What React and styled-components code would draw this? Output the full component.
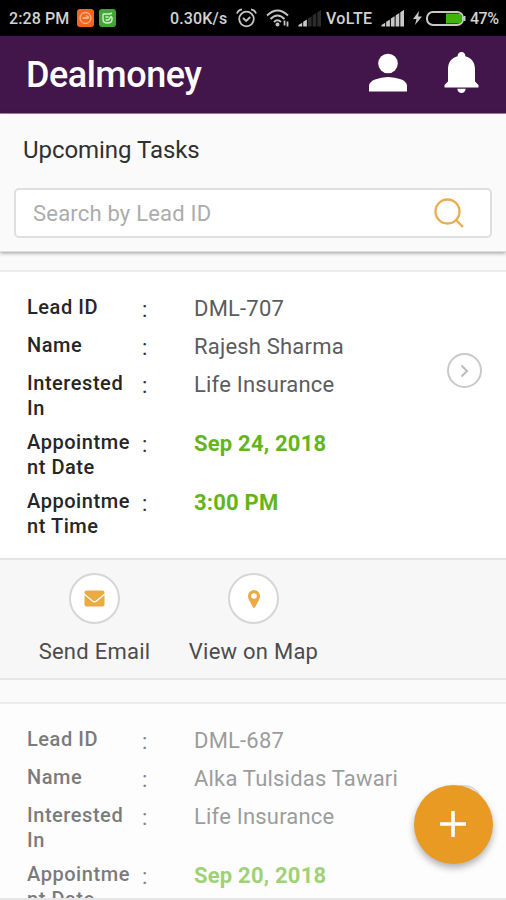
import styled, { createGlobalStyle } from "styled-components";

const GlobalStyle = createGlobalStyle`
  * {
    box-sizing: border-box;
  }

  body {
    margin: 0;
    overflow: hidden;
    background: #fafafa;
    font-family: Roboto, "Liberation Sans", sans-serif;
  }
`;

const Screen = styled.div`
  width: 506px;
  height: 900px;
  display: flex;
  flex-direction: column;
  overflow: hidden;
  position: relative;
  border-bottom: 2px solid #e6e6e6;
`;

const StatusBar = styled.div`
  flex: none;
  height: 36px;
  padding: 0 8px 0 9px;
  display: flex;
  justify-content: space-between;
  align-items: center;
  background: #000;
  color: #d2d2d2;
`;

const StatusGroup = styled.div`
  display: flex;
  align-items: center;

  svg {
    flex: none;
    display: block;
  }
`;

const StatusText = styled.span`
  width: ${({ $width }) => $width}px;
  margin-right: ${({ $gap }) => $gap || 0}px;
  font-size: 16px;
  font-weight: 500;
  line-height: 20px;
  padding-top: 1px;
  letter-spacing: ${({ $spacing }) => $spacing || 0}px;
  white-space: nowrap;
`;

const StatusIcon = styled.svg`
  margin-right: ${({ $gap }) => $gap || 0}px;
`;

const Header = styled.header`
  flex: none;
  height: 78px;
  padding: 0 27px 0 26px;
  display: flex;
  align-items: center;
  justify-content: space-between;
  background: #43164b;
  border-bottom: 1px solid #a08ba4;
  color: #fff;
`;

const Title = styled.h1`
  margin: 0;
  font-size: 36px;
  font-weight: 500;
  line-height: 42px;
  letter-spacing: -0.5px;
`;

const HeaderIcons = styled.div`
  display: flex;
  align-items: center;
  gap: 36px;
  margin-bottom: 5px;
`;

const SearchPanel = styled.section`
  flex: none;
  height: 138px;
  padding: 0 14px;
  background: #fafafa;
  border-bottom: 1px solid #dedede;
  box-shadow: 0 1px 4px rgba(0, 0, 0, 0.4);
`;

const SectionTitle = styled.h2`
  margin: 0;
  padding: 22px 0 0 9px;
  height: 74px;
  font-size: 24px;
  font-weight: 400;
  line-height: 29px;
  letter-spacing: -0.05px;
  color: #303030;
`;

const SearchBox = styled.div`
  height: 50px;
  padding: 0 26px 0 17px;
  display: flex;
  align-items: center;
  justify-content: space-between;
  background: #fff;
  border: 2px solid #dfdfdf;
  border-radius: 5px;
`;

const Placeholder = styled.span`
  padding-top: 1px;
  font-size: 22px;
  letter-spacing: 0.2px;
  color: #acacac;
`;

const TaskList = styled.main`
  flex: none;
  padding-top: 18px;
  display: flex;
  flex-direction: column;
  gap: 22px;
`;

const Card = styled.article`
  border-top: 2px solid #ececec;
  border-bottom: 2px solid #e6e6e6;
  background: ${({ $faded }) => ($faded ? "#fdfdfd" : "#fff")};
`;

const Details = styled.div`
  height: 286px;
  padding: 23px 24px 0 27px;
  display: flex;
  justify-content: space-between;
  opacity: ${({ $faded }) => ($faded ? 0.6 : 1)};
`;

const Rows = styled.div`
  display: flex;
  flex-direction: column;
  gap: 9px;
`;

const Row = styled.div`
  min-height: 29px;
  display: grid;
  grid-template-columns: 105px 62px auto;
  align-items: start;
`;

const Label = styled.div`
  font-size: 20px;
  font-weight: 500;
  line-height: 25px;
  letter-spacing: 0.55px;
  overflow-wrap: anywhere;
  color: #262626;
`;

const Colon = styled.div`
  padding: 1px 0 0 10px;
  font-size: 22px;
  line-height: 27px;
  color: #333;
`;

const Value = styled.div`
  font-size: 22px;
  font-weight: ${({ $highlight }) => ($highlight ? 700 : 400)};
  line-height: 27px;
  letter-spacing: 0.2px;
  white-space: nowrap;
  color: ${({ $highlight }) => ($highlight ? "#62b51c" : "#5c5c5c")};
`;

const OpenButton = styled.div`
  width: 35px;
  height: 35px;
  margin-top: 58px;
  display: flex;
  align-items: center;
  justify-content: center;
  border: 2px solid #c9c9c9;
  border-radius: 50%;
`;

const Actions = styled.div`
  height: 120px;
  padding: 13px 0 0 37px;
  display: flex;
  gap: 37px;
  background: #f7f7f7;
  border-top: 2px solid #e4e4e4;
`;

const Action = styled.div`
  display: flex;
  flex-direction: column;
  align-items: center;
  gap: 14px;
  width: ${({ $width }) => $width}px;
  font-size: 22px;
  line-height: 28px;
  letter-spacing: 0.25px;
  white-space: nowrap;
  color: #4c4c4c;
`;

const ActionIcon = styled.div`
  width: 51px;
  height: 51px;
  display: flex;
  align-items: center;
  justify-content: center;
  background: #fff;
  border: 2px solid #d6d6d6;
  border-radius: 50%;
`;

const AddButton = styled.div`
  position: absolute;
  right: 13px;
  bottom: 34px;
  width: 79px;
  height: 79px;
  padding: 0 1px 1px 0;
  display: flex;
  align-items: center;
  justify-content: center;
  background: #e89a22;
  border-radius: 50%;
  box-shadow: 0 4px 7px rgba(0, 0, 0, 0.3);
`;

const Signal = ({ gap, bars }) => (
  <StatusIcon $gap={gap} width="24" height="17" viewBox="0 0 24 17">
    {[0, 1, 2, 3, 4].map((i) => {
      const x = 0.5 + i * 4.7;
      const top = 15 - i * 3.2;
      return (
        <path
          key={i}
          d={`M${x} 16.5V${top}l3.7-2.3V16.5z`}
          fill={i < bars ? "#c8c8c8" : "#2c2c2c"}
        />
      );
    })}
  </StatusIcon>
);

const Status = () => (
  <StatusBar>
    <StatusGroup>
      <StatusText $width={61} $gap={7} $spacing={0.1}>
        2:28 PM
      </StatusText>
      <StatusIcon $gap={5} width="17" height="18" viewBox="0 0 17 18">
        <rect width="17" height="18" rx="3" fill="#f4661b" />
        <circle cx="8.5" cy="9" r="5.5" fill="none" stroke="#ffb18a" strokeWidth="1.3" />
        <path d="M5.5 9h6M9 6.5l3 2" stroke="#ffc6a8" strokeWidth="1.4" />
      </StatusIcon>
      <StatusIcon width="17" height="18" viewBox="0 0 17 18">
        <rect width="17" height="18" rx="3" fill="#43a536" />
        <path
          d="M4 5h7l2-1M4 5v5.5q0 3.5 4.5 3.5T13 10.500V8M6.500 8h3M6.500 11h3l3-4"
          fill="none"
          stroke="#d3f0cc"
          strokeWidth="1.4"
        />
      </StatusIcon>
    </StatusGroup>
    <StatusGroup>
      <StatusText $width={58} $gap={8} $spacing={0.15}>
        0.30K/s
      </StatusText>
      <StatusIcon
        $gap={9}
        width="21"
        height="20"
        viewBox="0 0 21 20"
        fill="none"
        stroke="#c4c4c4"
        strokeWidth="1.8"
      >
        <circle cx="10.5" cy="11" r="7.3" />
        <path d="M7 10l3.2 3 4-4M1 5.5Q2 2 6 1.3M20 5.5Q19 2 15 1.3" />
      </StatusIcon>
      <StatusIcon
        $gap={8}
        width="24"
        height="18"
        viewBox="0 0 24 18"
        fill="none"
        stroke="#c4c4c4"
        strokeWidth="2"
      >
        <path d="M1 6.5Q11.5-3.5 22 6.5M4.5 10q7-7 14 0M8 13q3.5-3.5 7 0" />
        <circle cx="11.5" cy="15.5" r="1" />
        <path d="M18.5 11.5v5M21.5 12.5v5" strokeWidth="1.8" />
      </StatusIcon>
      <Signal gap={4} bars={2} />
      <StatusText $width={46} $gap={9} $spacing={0.4}>
        VoLTE
      </StatusText>
      <Signal gap={8} bars={5} />
      <StatusIcon $gap={4} width="9" height="14" viewBox="0 0 9 14">
        <path d="M6 0L0 8h3.5L2 14l7-8.5H5.2z" fill="#c8c8c8" />
      </StatusIcon>
      <StatusIcon $gap={4} width="40" height="15" viewBox="0 0 40 15">
        <rect x="1" y="1" width="36" height="13" rx="6" fill="none" stroke="#c8c8c8" strokeWidth="2" />
        <path d="M20 2.5h13q3 0 3 5t-3 5H20z" fill="#3fb50a" />
        <path d="M38.5 5v5" stroke="#c8c8c8" strokeWidth="2" />
      </StatusIcon>
      <StatusText $width={28} $spacing={-0.5}>
        47%
      </StatusText>
    </StatusGroup>
  </StatusBar>
);

const Task = ({ task, faded }) => (
  <Card $faded={faded}>
    <Details $faded={faded}>
      <Rows>
        {task.map(([label, value, highlight]) => (
          <Row key={label}>
            <Label>{label}</Label>
            <Colon>:</Colon>
            <Value $highlight={highlight}>{value}</Value>
          </Row>
        ))}
      </Rows>
      <OpenButton>
        <svg width="9" height="14" viewBox="0 0 9 14" fill="none" stroke="#bcbcbc" strokeWidth="2">
          <path d="M1.5 1.5L7 7l-5.5 5.5" />
        </svg>
      </OpenButton>
    </Details>
    <Actions>
      <Action $width={115}>
        <ActionIcon>
          <svg width="21" height="17" viewBox="0 0 21 17">
            <rect x="0.5" y="0.5" width="20" height="16" rx="2" fill="#ebaa43" />
            <path d="M0 4l8.5 7q2 1.5 4 0L21 4" fill="none" stroke="#fff" strokeWidth="1.3" />
          </svg>
        </ActionIcon>
        Send Email
      </Action>
      <Action $width={129}>
        <ActionIcon>
          <svg width="12" height="18" viewBox="0 0 12 18">
            <path
              d="M6 0a6 6 0 0 0-6 6c0 2 .7 3.2 1.3 4.5L4.8 17q1.2 1.8 2.4 0l3.5-6.5C11.3 9.2 12 8 12 6a6 6 0 0 0-6-6zM6 3.2a2.8 2.8 0 1 1 0 5.6 2.8 2.8 0 0 1 0-5.6z"
              fill="#ebaa43"
            />
          </svg>
        </ActionIcon>
        View on Map
      </Action>
    </Actions>
  </Card>
);

const tasks = [
  [
    ["Lead ID", "DML-707"],
    ["Name", "Rajesh Sharma"],
    ["Interested In", "Life Insurance"],
    ["Appointment Date", "Sep 24, 2018", true],
    ["Appointment Time", "3:00 PM", true]
  ],
  [
    ["Lead ID", "DML-687"],
    ["Name", "Alka Tulsidas Tawari"],
    ["Interested In", "Life Insurance"],
    ["Appointment Date", "Sep 20, 2018", true]
  ]
];

export default function App() {
  return (
    <Screen>
      <GlobalStyle />
      <Status />
      <Header>
        <Title>Dealmoney</Title>
        <HeaderIcons>
          <svg width="39" height="39" viewBox="0 0 39 39" fill="#fff">
            <circle cx="19" cy="10.5" r="9.8" />
            <path d="M0 38.5V33Q0 29 6 26.5 12 24 19 24T32.5 26.5Q38 29 38 33v5.5z" />
          </svg>
          <svg width="35" height="41" viewBox="0 0 35 41" fill="#fff">
            <path d="M17.5 0a3.8 3.8 0 0 1 3.8 4.2C27.5 5.5 31 10.5 31 17v12.5l3.5 3.5v2.500H.5V33L4 29.500V17C4 10.500 7.500 5.500 13.700 4.200A3.800 3.800 0 0 1 17.500 0zM13.300 36.800h8.400a4.200 4.200 0 0 1-8.400 0z" />
          </svg>
        </HeaderIcons>
      </Header>
      <SearchPanel>
        <SectionTitle>Upcoming Tasks</SectionTitle>
        <SearchBox>
          <Placeholder>Search by Lead ID</Placeholder>
          <svg width="30" height="30" viewBox="0 0 30 30" fill="none" stroke="#e8ad4f" strokeWidth="2.3">
            <circle cx="13.5" cy="13.5" r="12" />
            <path d="M21.5 21.5l7.5 7.5" />
          </svg>
        </SearchBox>
      </SearchPanel>
      <TaskList>
        {tasks.map((task, i) => (
          <Task key={task[0][1]} task={task} faded={i > 0} />
        ))}
      </TaskList>
      <AddButton>
        <svg width="26" height="26" viewBox="0 0 26 26" stroke="#fff" strokeWidth="3.6">
          <path d="M13 0v26M0 13h26" />
        </svg>
      </AddButton>
    </Screen>
  );
}
